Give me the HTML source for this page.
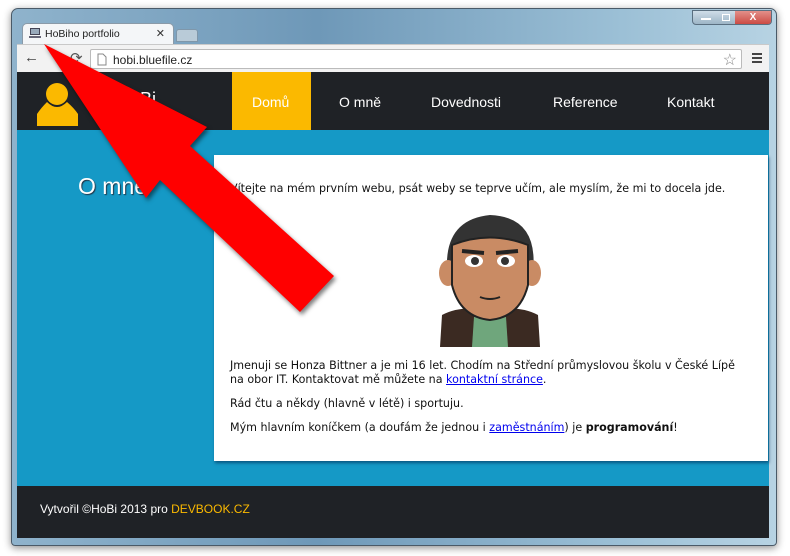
<!DOCTYPE html>
<html><head><meta charset="utf-8"><style>
*{margin:0;padding:0;box-sizing:border-box}
body{width:790px;height:556px;background:#fff;position:relative;overflow:hidden;font-family:"Liberation Sans",sans-serif}
.win{position:absolute;left:11px;top:8px;width:766px;height:538px;border:1px solid #4a5a68;border-radius:7px 7px 4px 4px;background:linear-gradient(90deg,#8fb3cc,#6e98b8 40%,#9cc0d6 80%,#b7d3e3);box-shadow:0 2px 8px rgba(0,0,0,.45)}
.tab{position:absolute;left:22px;top:23px;width:152px;height:22px;background:#f4f6f8;border:1px solid #8a9aa8;border-bottom:none;border-radius:5px 5px 0 0;}
.tab span{position:absolute;left:22px;top:4px;font-size:10.5px;color:#222}
.tab b{position:absolute;right:8px;top:3px;font-size:11px;color:#333;font-weight:normal}
.tab2{position:absolute;left:176px;top:29px;width:22px;height:13px;background:#b9cbd8;border:1px solid #7f97aa;border-radius:3px 3px 0 0}
.ctl{position:absolute;left:692px;top:10px;width:80px;height:15px;border:1px solid #5a6f80;border-radius:0 0 4px 4px;background:linear-gradient(#cfdde8,#9db5c6);overflow:hidden}
.ctl .x{position:absolute;right:0;top:0;width:36px;height:15px;background:linear-gradient(#e3908a,#c8413a);color:#fff;font-size:10px;font-weight:bold;text-align:center;line-height:14px}
.tb{position:absolute;left:17px;top:44px;width:752px;height:28px;background:#f2f2f2;border-top:1px solid #c9c9c9}
.url{position:absolute;left:90px;top:49px;width:652px;height:20px;background:#fff;border:1px solid #bbb;border-radius:2px;font-size:12px;color:#222;padding:3px 0 0 22px}
.nav{position:absolute;left:17px;top:72px;width:752px;height:58px;background:#1f2226}
.nav a{position:absolute;top:22px;color:#fff;font-size:14px;text-decoration:none}
.dom{position:absolute;left:232px;top:72px;width:79px;height:58px;background:#fbb900}
.blue{position:absolute;left:17px;top:130px;width:752px;height:356px;background:#1599c6}
.box{position:absolute;left:214px;top:155px;width:554px;height:306px;background:#fff;box-shadow:1px 2px 3px rgba(0,40,80,.6)}
.box p{position:absolute;left:16px;font-family:"DejaVu Sans",sans-serif;font-size:11.1px;line-height:14px;color:#111;white-space:nowrap}
.box a{color:#00e;text-decoration:underline}
.foot{position:absolute;left:17px;top:486px;width:752px;height:52px;background:#1f2226;color:#fff;font-size:12px;padding:16px 0 0 23px}
</style></head><body>
<div class="win"></div>
<div class="tab"><svg style="position:absolute;left:6px;top:4px" width="12" height="11"><rect x="1" y="0" width="10" height="7" fill="#445" /><rect x="2" y="1" width="8" height="5" fill="#9ab"/><rect x="0" y="8" width="12" height="2" fill="#667"/></svg><span>HoBiho portfolio</span><b>✕</b></div>
<div class="tab2"></div>
<div class="ctl"><span style="position:absolute;left:8px;top:7px;width:10px;height:2px;background:#fff"></span><span style="position:absolute;left:29px;top:3px;width:8px;height:7px;border:1px solid #fff"></span><div class="x">X</div></div>
<div class="tb"></div>
<div style="position:absolute;left:24px;top:49px;font-size:15px;color:#444;font-weight:bold">←</div>
<div style="position:absolute;left:70px;top:49px;font-size:15px;color:#555">⟳</div>
<div class="url">hobi.bluefile.cz<svg style="position:absolute;left:6px;top:3px" width="10" height="13"><path d="M1 1h5l3 3v8H1z" fill="#fff" stroke="#888"/></svg><span style="position:absolute;right:4px;top:0;font-size:16px;color:#888">☆</span></div>
<div style="position:absolute;left:752px;top:53px;width:10px;height:10px;border-top:2px solid #444;border-bottom:2px solid #444"><div style="margin-top:2px;height:2px;background:#444"></div></div>
<div class="nav"></div>
<svg style="position:absolute;left:35px;top:80px" width="45" height="46"><circle cx="22" cy="14" r="11" fill="#fbb900"/><path d="M12 22 Q6 28 2 34 L2 46 H43 V34 Q39 28 32 22 Q22 32 12 22z" fill="#fbb900"/></svg>
<div style="position:absolute;left:140px;top:89px;color:#fff;font-size:18px">Bi</div>
<div class="dom"></div>
<div class="nav" style="background:none"><a style="left:235px">Domů</a><a style="left:322px">O mně</a><a style="left:414px">Dovednosti</a><a style="left:536px">Reference</a><a style="left:650px">Kontakt</a></div>
<div class="blue"></div>
<div style="position:absolute;left:78px;top:173px;color:#fff;font-size:23px;text-shadow:1px 1px 1px #234">O mně</div>
<div class="box">
<p style="top:27px">Vítejte na mém prvním webu, psát weby se teprve učím, ale myslím, že mi to docela jde.</p>
<svg style="position:absolute;left:216px;top:50px" width="120" height="142">
<path d="M18 75 Q10 15 60 10 Q112 12 102 75z" fill="#333"/>
<path d="M12 110 L10 142 H110 L108 110 Q90 100 60 105 Q30 100 12 110z" fill="#3b2a22"/>
<path d="M44 112 L42 142 H78 L76 112z" fill="#6fa67c"/>
<ellipse cx="18" cy="68" rx="9" ry="13" fill="#c98b64"/><ellipse cx="102" cy="68" rx="9" ry="13" fill="#c98b64"/>
<path d="M22 40 Q60 25 98 40 L98 80 Q90 112 60 115 Q30 112 22 80z" fill="#c98b64" stroke="#222" stroke-width="2"/>
<ellipse cx="44" cy="56" rx="9" ry="6" fill="#fff"/><ellipse cx="76" cy="56" rx="9" ry="6" fill="#fff"/>
<circle cx="45" cy="56" r="4" fill="#333"/><circle cx="75" cy="56" r="4" fill="#333"/>
<path d="M32 46 L54 48 M66 48 L88 46" stroke="#222" stroke-width="4"/>
<path d="M50 92 Q60 96 70 92" stroke="#222" stroke-width="2" fill="none"/>
</svg>
<p style="top:204px">Jmenuji se Honza Bittner a je mi 16 let. Chodím na Střední průmyslovou školu v České Lípě<br>na obor IT. Kontaktovat mě můžete na <a>kontaktní stránce</a>.</p>
<p style="top:242px">Rád čtu a někdy (hlavně v létě) i sportuju.</p>
<p style="top:266px">Mým hlavním koníčkem (a doufám že jednou i <a>zaměstnáním</a>) je <b>programování</b>!</p>
</div>
<div class="foot">Vytvořil ©HoBi 2013 pro <span style="color:#fbb900">DEVBOOK.CZ</span></div>
<svg style="position:absolute;left:0;top:0" width="790" height="556"><polygon points="44,44 207,127 190,146 334,276 300,312 160,180 146,198" fill="#f00" style="filter:drop-shadow(2px 3px 2px rgba(0,0,0,.5))"/></svg>
</body></html>
